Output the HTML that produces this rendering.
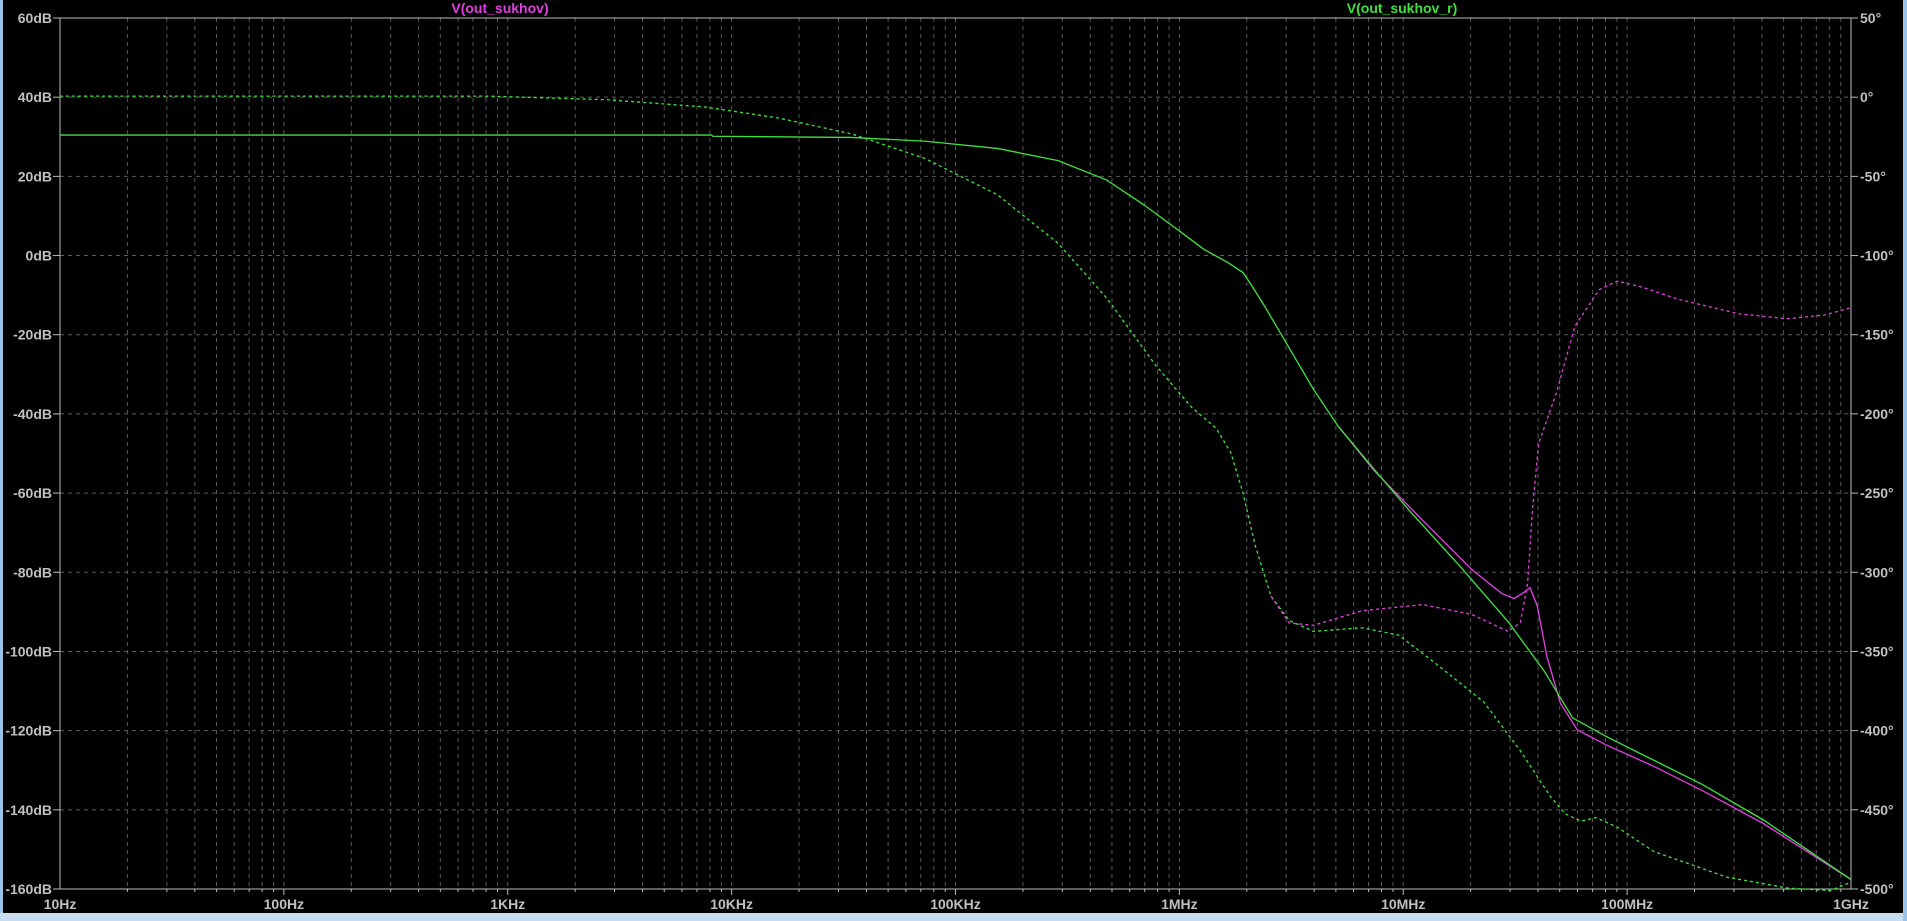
<!DOCTYPE html>
<html><head><meta charset="utf-8"><style>
html,body{margin:0;padding:0;background:#000;width:1907px;height:921px;overflow:hidden}
svg{display:block}
text{font-family:"Liberation Sans",sans-serif;font-size:14px;font-weight:bold}
</style></head><body>
<svg id="s" width="1907" height="921" xmlns="http://www.w3.org/2000/svg">
<rect x="0" y="0" width="1907" height="921" fill="#000"/>
<rect x="0" y="0" width="3" height="921" fill="#9cc4e8"/>
<rect x="0" y="913" width="1907" height="8" fill="#c8dcf0"/>
<rect x="1903" y="0" width="4" height="921" fill="#9cc4e8"/>
<g id="grid"></g>
<rect x="60" y="18" width="1791" height="871" fill="none" stroke="#bbb" stroke-width="1"/>
<g id="labels" fill="#c0c0c0"></g>
<text x="500" y="13" fill="#e040e0" text-anchor="middle">V(out_sukhov)</text>
<text x="1402" y="13" fill="#40e040" text-anchor="middle">V(out_sukhov_r)</text>
<g transform="scale(1.2162,1.2166)" fill="none" stroke-width="1.1">
<polyline stroke="#40e040" stroke-dasharray="2.5,2.5" points="49,79 400,79 500,82 580,88 640,97 700,110 760,130 820,160 870,200 910,245 950,300 980,335 1000,352 1012,372 1022,405 1032,448 1045,490 1060,510 1080,519 1120,516 1150,522 1180,545 1220,577 1250,617 1275,655 1287,669 1300,675 1312,672 1330,680 1360,700 1420,721 1470,730 1505,732 1522,725"/>
<polyline stroke="#e040e0" stroke-dasharray="2.5,2.5" points="1045,490 1060,512 1080,514 1120,502 1170,497 1210,505 1240,519 1250,512 1256,480 1260,420 1265,365 1280,322 1295,268 1315,238 1330,231 1350,236 1380,246 1430,258 1470,262 1500,259 1522,253"/>
<polyline stroke="#e040e0" points="1100,350 1130,387 1170,428 1210,468 1235,488 1245,492 1253,487 1258,483 1264,498 1272,540 1283,578 1297,600 1320,612 1360,630 1400,650 1450,677 1522,723"/>
<polyline stroke="#40e040" points="49,111 585,111 586,112 700,113 760,116 820,122 870,132 910,148 940,168 970,190 990,205 1010,216 1022,224 1030,236 1040,252 1060,286 1080,320 1100,350 1130,386 1160,421 1200,465 1240,511 1270,552 1293,590 1320,605 1360,625 1400,645 1450,674 1522,723"/>
</g>
</svg>
<script>
var ns="http://www.w3.org/2000/svg";
var g=document.getElementById('grid'),L=document.getElementById('labels');
function el(p,t,a,txt){var e=document.createElementNS(ns,t);for(var k in a)e.setAttribute(k,a[k]);if(txt)e.textContent=txt;p.appendChild(e);return e;}
var x0=60,x1=1851,y0=18,y1=889,dec=(x1-x0)/8,dy=(y1-y0)/11;
for(var d=0;d<8;d++){for(var m=1;m<=9;m++){var x=x0+dec*(d+Math.log10(m));if(m==1&&d==0)continue;
el(g,'line',{x1:x,y1:y0,x2:x,y2:y1,stroke:'#5a5a5a','stroke-dasharray':'4,4'});
el(g,'line',{x1:x,y1:y1,x2:x,y2:y1+(m==1?6:3),stroke:'#bbb'});}}
var fl=['10Hz','100Hz','1KHz','10KHz','100KHz','1MHz','10MHz','100MHz','1GHz'];
for(var i=0;i<=8;i++)el(L,'text',{x:x0+dec*i,y:909,'text-anchor':'middle'},fl[i]);
for(var j=0;j<=11;j++){var y=y0+dy*j;
if(j>0&&j<11)el(g,'line',{x1:x0,y1:y,x2:x1,y2:y,stroke:'#5a5a5a','stroke-dasharray':'4,4'});
el(g,'line',{x1:x0-7,y1:y,x2:x0,y2:y,stroke:'#bbb'});
el(g,'line',{x1:x1,y1:y,x2:x1+7,y2:y,stroke:'#bbb'});
el(L,'text',{x:x0-8,y:y+5,'text-anchor':'end'},(60-20*j)+'dB');
el(L,'text',{x:x1+9,y:y+5,'text-anchor':'start'},(50-50*j)+'\u00b0');}
</script>
</body></html>
